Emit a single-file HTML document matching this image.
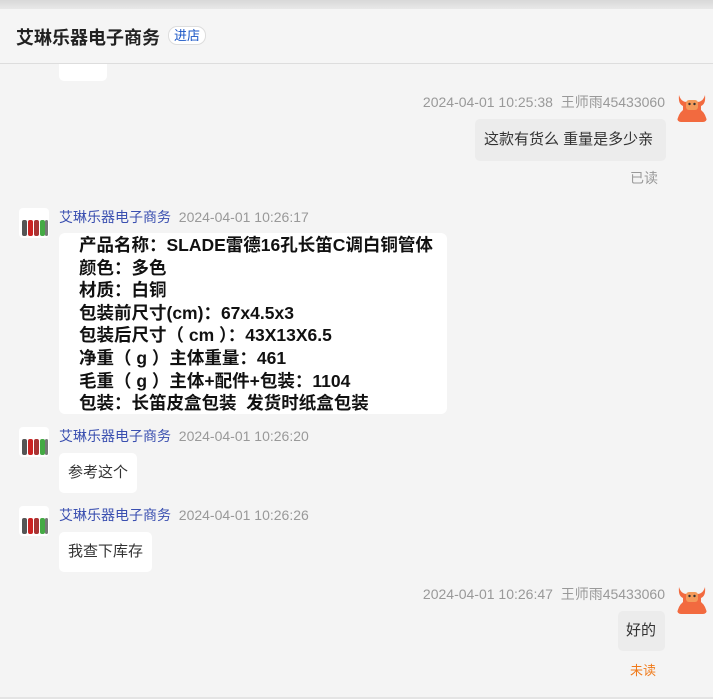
<!DOCTYPE html>
<html><head><meta charset="utf-8"><style>
body{margin:0;width:713px;height:699px;background:#f4f4f4;position:relative;overflow:hidden;font-family:"Liberation Sans","Noto Sans CJK SC",sans-serif;}
.a{position:absolute;white-space:nowrap}
.meta{font-size:14px;color:#999}
.name{color:#3a4fb0}
.bub{position:absolute;background:#fff;border-radius:5px;font-size:15px;color:#333;line-height:40px;padding:0 9px}
.me{background:#ececec}
.av{position:absolute;width:30px;height:30px;border-radius:4px;overflow:hidden}
.g{background:#fff;}
.g i{position:absolute;bottom:2px;width:5px;height:16px;border-radius:2px}
</style></head><body>
<div class="a" style="left:0;top:0;width:713px;height:9px;background:linear-gradient(#d8d8d8,#e8e8e8)"></div>
<div class="a" style="left:0;top:9px;width:713px;height:54px;background:#f5f5f5;border-bottom:1px solid #ddd"></div>
<div class="a" style="left:16px;top:24px;font-size:18px;font-weight:bold;color:#222">艾琳乐器电子商务</div>
<div class="a" style="left:168px;top:26px;width:36px;height:17px;border:1px solid #ddd;border-radius:9px;background:#fff;font-size:13px;color:#1a56c6;text-align:center;line-height:17px">进店</div>
<div class="a" style="left:59px;top:64px;width:48px;height:17px;background:#fff;border-radius:0 0 5px 5px"></div>

<div class="a meta" style="right:48px;top:92px">2024-04-01 10:25:38&nbsp; 王师雨45433060</div>
<div class="av" style="left:677px;top:92px"><svg width="30" height="30"><path d="M2 3 Q4 10 10 10 L20 10 Q26 10 28 3 Q29 12 24 14 L24 18 Q29 22 30 30 L0 30 Q1 22 6 18 L6 14 Q1 12 2 3Z" fill="#f26a3f"/><rect x="9" y="8" width="12" height="10" rx="3" fill="#f49a5a"/><circle cx="12.5" cy="12" r="1.2" fill="#333"/><circle cx="17.5" cy="12" r="1.2" fill="#333"/></svg></div>
<div class="bub me" style="left:475px;top:119px;width:173px;height:42px;line-height:42px">这款有货么 重量是多少亲</div>
<div class="a meta" style="left:630px;top:168px">已读</div>

<div class="av g" style="left:19px;top:208px"><i style="left:3px;background:#555"></i><i style="left:9px;background:#c22"></i><i style="left:15px;background:#a33"></i><i style="left:21px;background:#4a4"></i><i style="left:26px;width:3px;background:#777"></i></div>
<div class="a meta" style="left:59px;top:207px"><span class="name">艾琳乐器电子商务</span>&nbsp; 2024-04-01 10:26:17</div>
<div class="a" style="left:59px;top:233px;width:388px;height:181px;background:#fff;border-radius:6px"></div>
<div class="a" style="left:79px;top:234px;font-size:17.5px;font-weight:bold;color:#111;line-height:22.6px">产品名称：SLADE雷德16孔长笛C调白铜管体<br>颜色：多色<br>材质：白铜<br>包装前尺寸(cm)：67x4.5x3<br>包装后尺寸（ cm ）：43X13X6.5<br>净重（ g ）主体重量：461<br>毛重（ g ）主体+配件+包装：1104<br>包装：长笛皮盒包装&nbsp; 发货时纸盒包装</div>

<div class="av g" style="left:19px;top:427px"><i style="left:3px;background:#555"></i><i style="left:9px;background:#c22"></i><i style="left:15px;background:#a33"></i><i style="left:21px;background:#4a4"></i><i style="left:26px;width:3px;background:#777"></i></div>
<div class="a meta" style="left:59px;top:426px"><span class="name">艾琳乐器电子商务</span>&nbsp; 2024-04-01 10:26:20</div>
<div class="bub" style="left:59px;top:453px;height:40px">参考这个</div>

<div class="av g" style="left:19px;top:506px"><i style="left:3px;background:#555"></i><i style="left:9px;background:#c22"></i><i style="left:15px;background:#a33"></i><i style="left:21px;background:#4a4"></i><i style="left:26px;width:3px;background:#777"></i></div>
<div class="a meta" style="left:59px;top:505px"><span class="name">艾琳乐器电子商务</span>&nbsp; 2024-04-01 10:26:26</div>
<div class="bub" style="left:59px;top:532px;height:40px">我查下库存</div>

<div class="a meta" style="right:48px;top:584px">2024-04-01 10:26:47&nbsp; 王师雨45433060</div>
<div class="av" style="left:677px;top:584px"><svg width="30" height="30"><path d="M2 3 Q4 10 10 10 L20 10 Q26 10 28 3 Q29 12 24 14 L24 18 Q29 22 30 30 L0 30 Q1 22 6 18 L6 14 Q1 12 2 3Z" fill="#f26a3f"/><rect x="9" y="8" width="12" height="10" rx="3" fill="#f49a5a"/><circle cx="12.5" cy="12" r="1.2" fill="#333"/><circle cx="17.5" cy="12" r="1.2" fill="#333"/></svg></div>
<div class="bub me" style="left:618px;top:611px;width:30px;height:40px;line-height:40px;padding:0 9px 0 8px">好的</div>
<div class="a" style="left:630px;top:660px;font-size:13px;color:#f07a1a">未读</div>
<div class="a" style="left:0;top:697px;width:713px;height:2px;background:#e4e4e4"></div>
</body></html>
